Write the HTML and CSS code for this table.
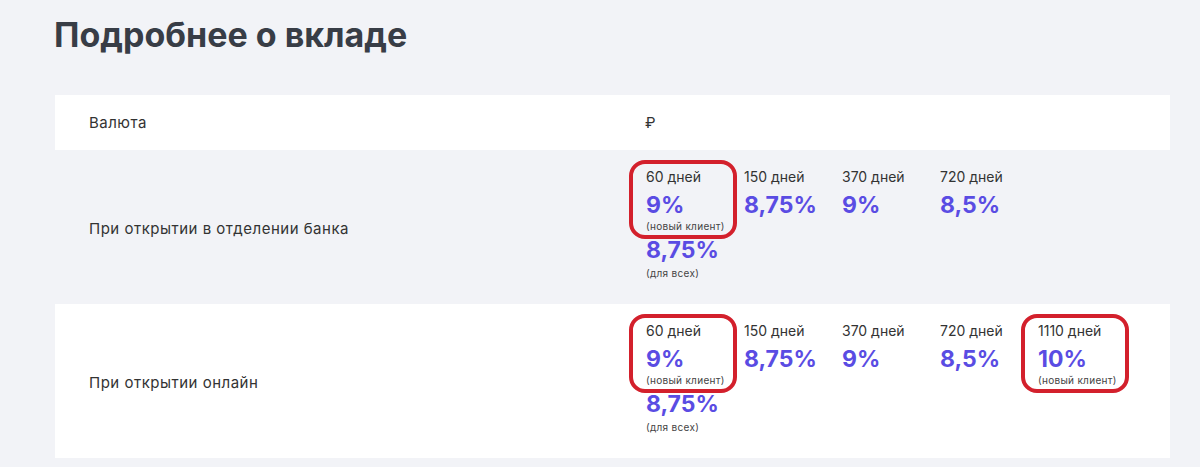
FILE: index.html
```html
<!DOCTYPE html>
<html lang="ru">
<head>
    <meta charset="UTF-8">
    <title>Подробнее о вкладе</title>
    <link rel="stylesheet" href="styles.css">
</head>
<body>
<div id="details">
    <h1 class="title">Подробнее о вкладе</h1>
    <div class="table">
        <div class="row row-white row-short">
            <div class="label">Валюта</div>
            <div class="value">₽</div>
        </div>
        <div class="row">
            <div class="label">При открытии в отделении банка</div>
            <div class="terms">
                <div class="term">
                    <div class="term-main marked">
                        <div class="days">60 дней</div>
                        <div class="rate">9%</div>
                        <div class="note">(новый клиент)</div>
                    </div>
                    <div class="rate rate-extra">8,75%</div>
                    <div class="note note-extra">(для всех)</div>
                </div>
                <div class="term">
                    <div class="days">150 дней</div>
                    <div class="rate">8,75%</div>
                </div>
                <div class="term">
                    <div class="days">370 дней</div>
                    <div class="rate">9%</div>
                </div>
                <div class="term">
                    <div class="days">720 дней</div>
                    <div class="rate">8,5%</div>
                </div>
            </div>
        </div>
        <div class="row row-white">
            <div class="label">При открытии онлайн</div>
            <div class="terms">
                <div class="term">
                    <div class="term-main marked">
                        <div class="days">60 дней</div>
                        <div class="rate">9%</div>
                        <div class="note">(новый клиент)</div>
                    </div>
                    <div class="rate rate-extra">8,75%</div>
                    <div class="note note-extra">(для всех)</div>
                </div>
                <div class="term">
                    <div class="days">150 дней</div>
                    <div class="rate">8,75%</div>
                </div>
                <div class="term">
                    <div class="days">370 дней</div>
                    <div class="rate">9%</div>
                </div>
                <div class="term">
                    <div class="days">720 дней</div>
                    <div class="rate">8,5%</div>
                </div>
                <div class="term">
                    <div class="term-main marked">
                        <div class="days">1110 дней</div>
                        <div class="rate">10%</div>
                        <div class="note">(новый клиент)</div>
                    </div>
                </div>
            </div>
        </div>
    </div>
</div>
</body>
</html>
```

FILE: styles.css
```css
* {
    margin: 0;
    padding: 0;
    box-sizing: border-box;
}

body {
    background: #f2f3f7;
    font-family: Inter, "Noto Sans", sans-serif;
    color: #333;
}

#details {
    width: 1115px;
    margin-left: 55px;
}

.title {
    font-size: 34px;
    line-height: 44px;
    font-weight: 700;
    color: #383d46;
    padding-top: 13px;
    margin-bottom: 38px;
    margin-left: -1px;
}

.row {
    display: grid;
    grid-template-columns: 591px 1fr;
    align-items: center;
}

.row-white {
    background: #fff;
}

.row-short {
    height: 55px;
}

.label {
    padding: 3px 0 0 34px;
    font-size: 15px;
    line-height: 20px;
    letter-spacing: 0.5px;
}

.row-short .label {
    padding-top: 1px;
}

.value {
    font-size: 15px;
    line-height: 20px;
    margin-left: -1px;
}

.terms {
    display: flex;
    padding: 17px 0 24px;
}

.term {
    width: 98px;
}

.term-main {
    position: relative;
}

/* красная рамка вокруг выделенных ставок */
.marked::before {
    content: "";
    position: absolute;
    left: -17px;
    top: -7px;
    width: 108px;
    bottom: -6px;
    box-sizing: border-box;
    border: 4px solid #d3202c;
    border-radius: 16px;
}

.days {
    font-size: 14px;
    line-height: 20px;
    margin-bottom: 4px;
}

.rate {
    font-size: 23px;
    line-height: 28px;
    font-weight: 700;
    color: #5a4ce3;
}

.rate-extra {
    margin-top: 3px;
}

.note {
    font-size: 10px;
    line-height: 14px;
    letter-spacing: 0.3px;
    color: #444;
}

.note-extra {
    margin-top: 2px;
}
```
